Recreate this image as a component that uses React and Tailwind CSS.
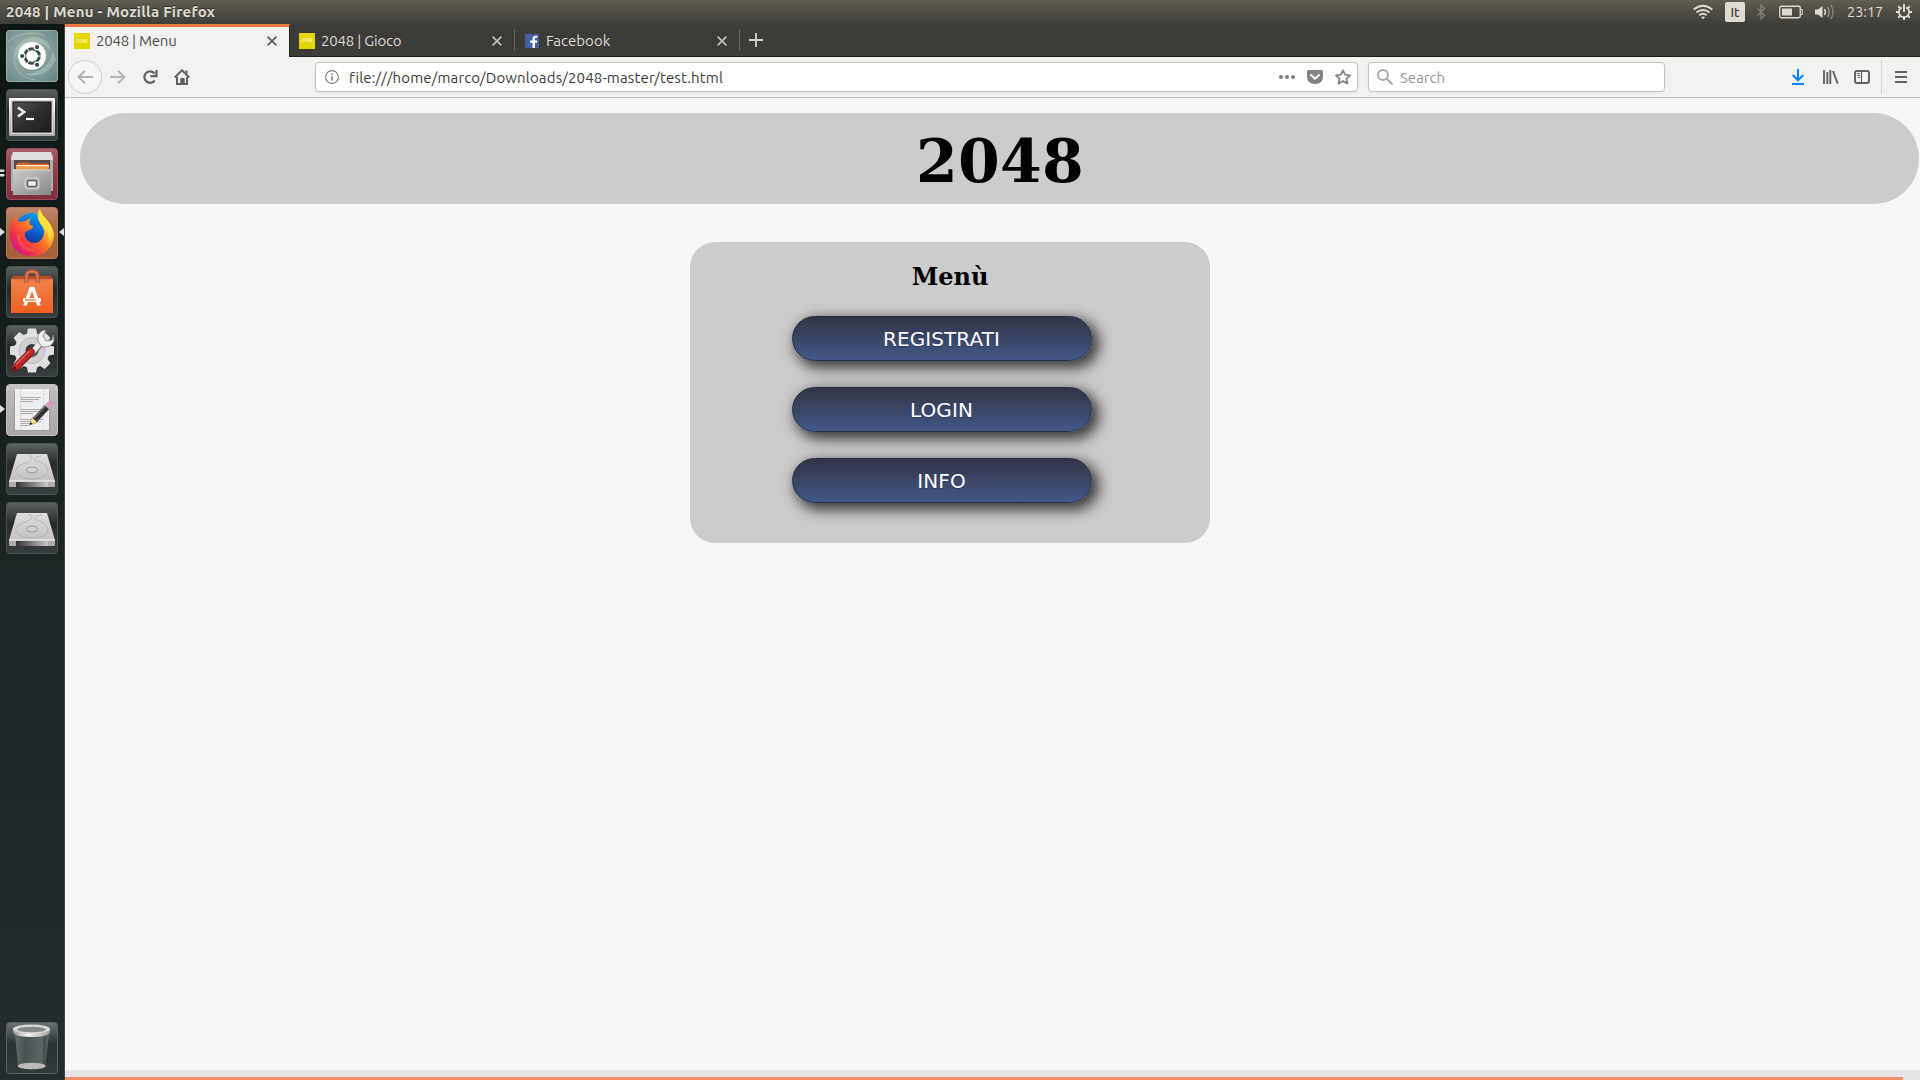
import React from 'react';

const UI = "font-['Ubuntu','Noto_Sans',sans-serif]";

/* ---------- launcher artwork ---------- */

function UbuntuLogo() {
  return (
    <svg viewBox="0 0 52 52" className="size-full">
      <defs>
        <radialGradient id="ub" cx=".45" cy=".45" r=".75">
          <stop offset="0" stopColor="#a9bfbc" />
          <stop offset=".6" stopColor="#7d9a98" />
          <stop offset="1" stopColor="#5f8280" />
        </radialGradient>
      </defs>
      <rect width="52" height="52" rx="3.5" fill="url(#ub)" />
      <path d="M8 34C6 18 16 7 30 7c8 1 14 6 15 15-4-7-10-10-18-9C15 14 9 22 8 34Z" fill="#c6d5d2" opacity=".4" />
      <path d="M18 44c14 5 27-2 32-15l-4-10c1 14-10 25-28 25Z" fill="#d2dedb" opacity=".35" />
      <path d="M2 12C12 3 26 1 38 5M8 32c2 10 10 17 22 18" fill="none" stroke="#bfd0cd" opacity=".6" />
      <circle cx="26" cy="27" r="14" fill="#4d6866" opacity=".6" />
      <circle cx="26" cy="26" r="14" fill="#fbfbfa" />
      <circle cx="26" cy="26" r="7.3" fill="none" stroke="#3b4d4b" strokeWidth="3" />
      <g stroke="#fbfbfa" strokeWidth="1.2" fill="#3b4d4b">
        <circle cx="16.2" cy="26" r="2.7" />
        <circle cx="31" cy="17.2" r="2.7" />
        <circle cx="31" cy="34.8" r="2.7" />
      </g>
      <path d="M26 26l-5 8M26 26l-5-8M26 26h10" stroke="#fbfbfa" strokeWidth="1" />
      <circle cx="26" cy="26" r="5.6" fill="#fbfbfa" />
      <rect x=".5" y=".5" width="51" height="51" rx="3.5" fill="none" stroke="#b2c6c4" opacity=".6" />
    </svg>
  );
}

function TileBack({ id, top, mid, bottom, edge }) {
  return (
    <>
      <defs>
        <linearGradient id={id} x1="0" y1="0" x2="0" y2="1">
          <stop offset="0" stopColor={top} />
          <stop offset=".42" stopColor={mid} />
          <stop offset="1" stopColor={bottom} />
        </linearGradient>
      </defs>
      <rect x=".5" y=".5" width="51" height="51" rx="3.5" fill={`url(#${id})`} stroke={edge} />
    </>
  );
}

const DARK = { top: '#5d6262', mid: '#242a2a', bottom: '#373e3f', edge: '#4b5252' };

function Terminal() {
  return (
    <svg viewBox="0 0 52 52" className="size-full">
      <TileBack id="tt" {...DARK} />
      <defs>
        <linearGradient id="scr" x1="0" y1="0" x2="1" y2="1">
          <stop offset="0" stopColor="#555" />
          <stop offset=".5" stopColor="#2d2d2d" />
          <stop offset="1" stopColor="#1c1c1c" />
        </linearGradient>
        <linearGradient id="frm" x1="0" y1="0" x2="0" y2="1">
          <stop offset="0" stopColor="#fff" />
          <stop offset="1" stopColor="#a9a9a9" />
        </linearGradient>
      </defs>
      <rect x="3" y="9" width="46" height="38" rx="1" fill="url(#frm)" />
      <rect x="5" y="11" width="42" height="34" fill="#d2d2d2" />
      <rect x="7" y="13" width="38" height="30" fill="url(#scr)" stroke="#111" />
      <path d="M12 18.500l6 4.500-6 4.500" fill="none" stroke="#e8e8e8" strokeWidth="2.800" />
      <path d="M20 30h8" stroke="#fff" strokeWidth="2.200" />
    </svg>
  );
}

function Files() {
  return (
    <svg viewBox="0 0 52 52" className="size-full">
      <TileBack id="ft" top="#a55f68" mid="#8c3d48" bottom="#7d2f3b" edge="#a04d59" />
      <defs>
        <linearGradient id="drw" x1="0" y1="0" x2="1" y2="1">
          <stop offset="0" stopColor="#cdcdcd" />
          <stop offset="1" stopColor="#868686" />
        </linearGradient>
      </defs>
      <path d="M7 4h38l2 4v35H5V8Z" fill="#adadad" />
      <path d="M7 4h38l2 8H5Z" fill="#dedede" />
      <rect x="8" y="12" width="36" height="10" fill="#5b4a44" />
      <path d="M11 16l2-1.500h9l2 1h18v7H11Z" fill="#d9622f" />
      <path d="M10 17h33v1.500H10Z" fill="#fff1da" />
      <path d="M10 18.500h33v3H10Z" fill="#f0a04b" />
      <path d="M7 21.500h38v25.500H7Z" fill="url(#drw)" />
      <path d="M7 22h38" stroke="#dadada" />
      <rect x="19" y="30" width="14" height="11" rx="2" fill="#b9b9b9" stroke="#d5d5d5" />
      <rect x="21.500" y="32.500" width="9" height="6" rx="1" fill="#eee" stroke="#5d5d5d" strokeWidth="1.400" />
    </svg>
  );
}

function Firefox() {
  return (
    <svg viewBox="0 0 52 52" className="size-full">
      <TileBack id="fx" top="#c08a6b" mid="#a96744" bottom="#a7603c" edge="#b97a58" />
      <defs>
        <linearGradient id="fox" x1=".9" y1=".1" x2=".15" y2=".85">
          <stop offset="0" stopColor="#fff44f" />
          <stop offset=".28" stopColor="#ffc02a" />
          <stop offset=".5" stopColor="#ff7a22" />
          <stop offset=".78" stopColor="#f53a45" />
          <stop offset="1" stopColor="#dc1480" />
        </linearGradient>
        <linearGradient id="glb" x1=".7" y1="0" x2=".3" y2="1">
          <stop offset="0" stopColor="#0aa0ea" />
          <stop offset=".5" stopColor="#0d62d2" />
          <stop offset="1" stopColor="#16257d" />
        </linearGradient>
      </defs>
      <circle cx="26" cy="23" r="17" fill="url(#glb)" />
      <path d="M9 10l4 5c3-1 5 0 7-1s3-3 5-3c-2 2-2 4-1 7l3 1c0 3-4 4-6 5s-3 3-2 5c1 4 5 7 9 7 6 0 10-5 10-11 0-5-3-7-5-11-2-4-2-9 1-12 1 5 5 8 8 12 4 5 6 10 6 15C47 41 38 49 26 49 13 49 4 40 4 28c0-6 1-13 5-18Z" fill="url(#fox)" />
      <path d="M34 2c0 5 4 8 8 13 5 6 5 14 1 21 1-8-3-12-7-17-4-5-5-12-2-17Z" fill="#ffe83d" opacity=".7" />
      <path d="M13 27c-2 9 6 17 15 16" fill="none" stroke="#ff7a3b" strokeWidth="3" opacity=".4" />
    </svg>
  );
}

function Software() {
  return (
    <svg viewBox="0 0 52 52" className="size-full">
      <TileBack id="st" {...DARK} />
      <defs>
        <linearGradient id="bag" x1="0" y1="0" x2="0" y2="1">
          <stop offset="0" stopColor="#cf5934" />
          <stop offset=".15" stopColor="#f1824b" />
          <stop offset="1" stopColor="#ee5f1f" />
        </linearGradient>
      </defs>
      <path d="M5 13l3-3h36l3 3v34H5Z" fill="url(#bag)" />
      <path d="M5 13l3-3h36l3 3Z" fill="#b84d2c" />
      <path d="M20.500 17V10q0-4.500 5.500-4.500t5.500 4.500v7" fill="none" stroke="#a84a2c" strokeWidth="4" />
      <path d="M20.500 17V10q0-4.500 5.500-4.500t5.500 4.500v7" fill="none" stroke="#d97a55" strokeWidth="2.400" />
      <path d="M19 39.500l6-17h2l6 17" fill="none" stroke="#fff" strokeWidth="3.600" />
      <rect x="17" y="32" width="18" height="4" rx="1.500" fill="#fff" />
      <path d="M19 34h11" stroke="#ee6b2e" strokeWidth="1.200" />
    </svg>
  );
}

const TEETH = [0, 45, 90, 135, 180, 225, 270, 315];

function Settings() {
  return (
    <svg viewBox="0 0 52 52" className="size-full">
      <TileBack id="se" {...DARK} />
      <g fill="#e0e0e0">
        {TEETH.map((a) => (
          <path key={a} d="M22 3.500h8l1.500 7h-11Z" transform={`rotate(${a} 26 25.500)`} />
        ))}
        <circle cx="26" cy="25.500" r="17.500" />
      </g>
      <circle cx="26" cy="25.500" r="13" fill="#d0d0d0" stroke="#bcbcbc" />
      <circle cx="26" cy="25.500" r="6.500" fill="#363b3b" />
      <path d="M24 30.500l12-13" stroke="#777" strokeWidth="6.500" />
      <path d="M24 29.500l12-13" stroke="#ececec" strokeWidth="5" />
      <path d="M32 15c-1-5 2-10 8-10l-3 6 3 5 6-1 1-5c3 6-1 12-8 12-4 0-6-3-7-7Z" fill="#f1f1f1" stroke="#777" strokeWidth=".8" />
      <path d="M9.500 42.500L25 27" stroke="#7c1512" strokeWidth="7.500" strokeLinecap="round" />
      <path d="M9.500 42L25 26.500" stroke="#bf2926" strokeWidth="6" strokeLinecap="round" />
      <path d="M10 39.500L23 26.500" stroke="#da625f" strokeWidth="1.300" strokeLinecap="round" />
      <circle cx="8.800" cy="43" r="1.400" fill="#40100e" />
    </svg>
  );
}

function Gedit() {
  return (
    <svg viewBox="0 0 52 52" className="size-full">
      <TileBack id="ge" top="#c6c4c4" mid="#b3b1b1" bottom="#aaa8a8" edge="#c4c2c2" />
      <rect x="8" y="6" width="36" height="41" fill="#8d8d8d" opacity=".6" />
      <rect x="9" y="5" width="34" height="41" fill="#f1f1f1" />
      <path d="M14.500 5v41" stroke="#f3c4c4" />
      <path d="M37.500 5v41" stroke="#cfdcf0" strokeWidth=".8" />
      <path d="M10 10h32M10 19h32M10 22h32M10 31h32M10 42h32" stroke="#dde7f3" strokeWidth=".7" />
      <path d="M15 13.500h20M15 15.500h18M15 17.500h12M15 25.500h20M15 27.500h18M15 29.500h12M15 35.500h22M15 37.500h20M15 39.500h12M15 41.500h8" stroke="#a3a3a3" strokeWidth=".9" />
      <path d="M23.500 41l2.500-7.500 5.500 5Z" fill="#f0e186" stroke="#8c8240" strokeWidth=".5" />
      <path d="M23.500 41l1-3 2 1.900Z" fill="#222" />
      <path d="M28.800 36L41 23" stroke="#333" strokeWidth="6" />
      <path d="M28 34.200L39.500 22" stroke="#808080" strokeWidth="1.200" />
      <path d="M41 23l2-2" stroke="#bbb" strokeWidth="6" />
      <path d="M43 20.900l1.300-1.400" stroke="#dc9ac3" strokeWidth="5.800" strokeLinecap="round" />
    </svg>
  );
}

function Disk({ id }) {
  return (
    <svg viewBox="0 0 52 52" className="size-full">
      <TileBack id={`${id}t`} {...DARK} />
      <defs>
        <linearGradient id={`${id}a`} x1="0" y1="0" x2="0" y2="1">
          <stop offset="0" stopColor="#dedede" />
          <stop offset="1" stopColor="#c3c3c3" />
        </linearGradient>
        <linearGradient id={`${id}b`} x1="0" y1="0" x2="1" y2="0">
          <stop offset="0" stopColor="#333" />
          <stop offset="1" stopColor="#c9c9c9" />
        </linearGradient>
      </defs>
      <path d="M11 11h30l8 27H3Z" fill={`url(#${id}a)`} />
      <path d="M3 38h46v5q0 1-1 1H4q-1 0-1-1Z" fill="#aeaeae" />
      <path d="M10 39h32v5H10Z" fill={`url(#${id}b)`} />
      <path d="M3 38h46" stroke="#fff" />
      <path d="M22 13c8-1 3 5-2 7-7 2-11 5-10 9 1 4 8 7 16 7s16-3 16-8-6-9-12-10c-3-1-1-4 5-5" fill="none" stroke="#b0b0b0" strokeWidth=".9" />
      <ellipse cx="26" cy="27" rx="5.500" ry="3" fill="#d2d2d2" stroke="#8f8f8f" strokeWidth=".9" />
    </svg>
  );
}

function Trash() {
  return (
    <svg viewBox="0 0 52 52" className="size-full">
      <TileBack id="tr" top="#6c7475" mid="#2a3132" bottom="#30393b" edge="#5a6263" />
      <defs>
        <linearGradient id="can" x1="0" y1="0" x2="1" y2="0">
          <stop offset="0" stopColor="#6c7373" />
          <stop offset=".3" stopColor="#4f5656" />
          <stop offset=".8" stopColor="#666d6d" />
          <stop offset=".85" stopColor="#474e4e" />
          <stop offset="1" stopColor="#6b7272" />
        </linearGradient>
        <linearGradient id="rim" x1="0" y1="0" x2="1" y2="0">
          <stop offset="0" stopColor="#979797" />
          <stop offset=".4" stopColor="#f3f3ef" />
          <stop offset="1" stopColor="#a0a09d" />
        </linearGradient>
      </defs>
      <path d="M9 12h34l-3.500 32q-1 3.500-13.500 3.500T12 44Z" fill="url(#can)" opacity=".85" />
      <ellipse cx="25.700" cy="44" rx="14" ry="3.300" fill="#b8bab8" />
      <path d="M7 7v3.500q3 4.500 18.500 4.500T44 10.500V7Z" fill="url(#rim)" />
      <ellipse cx="25.500" cy="7" rx="18.500" ry="4.500" fill="#dadad6" />
      <ellipse cx="25.500" cy="7.500" rx="14.500" ry="2.800" fill="#858a89" />
    </svg>
  );
}

function Launcher() {
  const apps = [
    { k: 'dash', el: <UbuntuLogo /> },
    { k: 'term', el: <Terminal /> },
    { k: 'files', el: <Files />, mark: 'double' },
    { k: 'firefox', el: <Firefox />, mark: 'active' },
    { k: 'software', el: <Software /> },
    { k: 'settings', el: <Settings /> },
    { k: 'gedit', el: <Gedit />, mark: 'single' },
    { k: 'disk1', el: <Disk id="d1" /> },
    { k: 'disk2', el: <Disk id="d2" /> },
  ];
  return (
    <aside className="flex w-[65px] shrink-0 flex-col gap-[7px] border-r border-[#3c4444] bg-linear-to-b from-[#0e1615] via-[#1c2524] via-50% to-[#232d2f] pt-[6px] pb-[6px]">
      {apps.map((a) => (
        <div key={a.k} className="relative h-[52px] w-full shrink-0 pl-[6px]">
          <div className="size-[52px]">{a.el}</div>
          {(a.mark === 'active' || a.mark === 'single') && (
            <svg viewBox="0 0 5 8" className="absolute top-[21px] left-0 h-[8px] w-[5px]">
              <path d="M0 0l5 4-5 4Z" fill="#dedede" />
            </svg>
          )}
          {a.mark === 'active' && (
            <svg viewBox="0 0 5 8" className="absolute top-[21px] right-0 h-[8px] w-[5px]">
              <path d="M5 0L0 4l5 4Z" fill="#dedede" />
            </svg>
          )}
          {a.mark === 'double' && (
            <svg viewBox="0 0 5 8" className="absolute top-[21px] left-0 h-[8px] w-[5px]">
              <path d="M0 .5h3.500l1.500 1L3.500 3H0ZM0 5h3.500l1.500 1.200L3.500 7.500H0Z" fill="#dedede" />
            </svg>
          )}
        </div>
      ))}
      <div className="mt-auto ml-[6px] size-[52px]">
        <Trash />
      </div>
    </aside>
  );
}

/* ---------- system panel ---------- */

function TopPanel() {
  return (
    <header className="flex h-6 shrink-0 items-center bg-linear-to-b from-[#5f5c50] to-[#3f3e39] pl-[6px] text-[#dfdbd2]">
      <span className="text-[15px] leading-6 font-bold tracking-[0.240px] whitespace-nowrap [text-shadow:0_-1px_0_#2b2a26]">2048 | Menu - Mozilla Firefox</span>
      <svg viewBox="0 0 20 16" className="ml-auto h-4 w-5 shrink-0" fill="none" stroke="#dfdbd2" strokeWidth="1.800">
        <path d="M.700 5.500q9.300-7.500 18.600 0M3.500 8.500q6.500-5 13 0M6.300 11.300q3.700-3 7.400 0" />
        <path d="M8 13.300q2-1.500 4 0l-2 2Z" fill="#dfdbd2" stroke="none" />
      </svg>
      <span className="ml-3 flex size-5 shrink-0 items-center justify-center rounded-[2px] bg-[#dfdbd2] text-[13px] leading-none font-medium text-[#3c3b37]">It</span>
      <svg viewBox="0 0 10 16" className="ml-[11px] h-4 w-[10px] shrink-0" fill="none" stroke="#85827a" strokeWidth="1.300">
        <path d="M1.500 4.500l7 7L5 15V1l3.500 3.500-7 7" />
      </svg>
      <svg viewBox="0 0 24 14" className="ml-[13px] h-[14px] w-6 shrink-0" fill="none" stroke="#dfdbd2">
        <rect x=".750" y="1.250" width="20.500" height="11.500" rx="1.500" strokeWidth="1.300" />
        <rect x="3" y="3.500" width="10" height="7" fill="#dfdbd2" stroke="none" />
        <path d="M22 4.500h1.300v5H22" />
      </svg>
      <svg viewBox="0 0 20 16" className="ml-3 h-4 w-5 shrink-0" fill="none">
        <path d="M0 5.500h3L7.500 2v12L3 10.500H0Z" fill="#dfdbd2" />
        <path d="M9.500 5q2 3 0 6" stroke="#dfdbd2" strokeWidth="1.500" />
        <path d="M12.500 3q3.500 5 0 10" stroke="#96938a" strokeWidth="1.500" />
        <path d="M15.500 .800q5 7.200 0 14.400" stroke="#827f77" strokeWidth="1.500" />
      </svg>
      <span className="ml-[12px] w-[37px] shrink-0 text-[14.500px] leading-6 whitespace-nowrap">23:17</span>
      <svg viewBox="0 0 16 16" className="mr-2 ml-[12px] size-4 shrink-0" fill="none" stroke="#dfdbd2">
        <path d="M5.800 3.300a5.200 5.200 0 1 0 4.400 0" strokeWidth="1.900" />
        <path d="M8 0v8" strokeWidth="2" />
        <path d="M0 8h2.500M13.500 8H16M8 13.500V16M2.300 2.300l1.800 1.800M13.700 2.300l-1.800 1.800M2.300 13.700l1.800-1.800M13.700 13.700l-1.800-1.800" strokeWidth="2" />
      </svg>
    </header>
  );
}

/* ---------- browser chrome ---------- */

function Favicon2048() {
  return (
    <span className="flex size-4 shrink-0 items-center justify-center bg-[#e6d600] text-[5px] leading-none font-bold text-[#fbf6b8]">2048</span>
  );
}

function FavFacebook() {
  return (
    <svg viewBox="0 0 14 14" className="size-[14px] shrink-0">
      <rect width="14" height="14" rx=".500" fill="#4460a0" />
      <path d="M7.500 14V8.700H5.300V6.500h2.200V5c0-2.300 1.300-3.300 3.200-3.300h1.600v2.100h-1.200c-.900 0-1.200.4-1.200 1.200v1.500h2.300l-.300 2.200h-2V14Z" fill="#fff" />
    </svg>
  );
}

function Close({ color }) {
  return (
    <svg viewBox="0 0 10 10" className="mr-3 ml-auto size-[10px] shrink-0" stroke={color} strokeWidth="1.700">
      <path d="M.600 .600l8.800 8.800M9.400 .600L.600 9.400" />
    </svg>
  );
}

function Tabs() {
  return (
    <div className="flex h-[33px] shrink-0 border-b border-[#1f1e1b] bg-[#3c3b37] text-[15px]">
      <div className="-mb-px flex w-[225px] items-center border-t-[3px] border-r border-t-[#f07746] border-r-[#24231f] bg-[#f3f2f1] pb-[2px] pl-[9px] text-[#4c4c4c]">
        <Favicon2048 />
        <span className="ml-[6px] tracking-[-0.250px] whitespace-nowrap">2048 | Menu</span>
        <Close color="#5c5b5a" />
      </div>
      <div className="flex w-[225px] items-center pt-px pr-px pl-[9px] text-[#dcd9d2]">
        <Favicon2048 />
        <span className="ml-[6px] pt-px tracking-[-0.200px] whitespace-nowrap">2048 | Gioco</span>
        <Close color="#c3bfb6" />
      </div>
      <div className="my-[5px] -ml-px w-px bg-[#6b6963]" />
      <div className="flex w-[225px] items-center pt-px pr-px pl-[10px] text-[#dcd9d2]">
        <FavFacebook />
        <span className="ml-[7px] pt-px tracking-[0.020px] whitespace-nowrap">Facebook</span>
        <Close color="#c3bfb6" />
      </div>
      <div className="my-[5px] -ml-px w-px bg-[#6b6963]" />
      <svg viewBox="0 0 14 14" className="mt-[9px] ml-[9px] size-[14px]" stroke="#d2cec5" strokeWidth="1.800">
        <path d="M7 0v14M0 7h14" />
      </svg>
    </div>
  );
}

function NavBar() {
  return (
    <div className="flex h-[41px] shrink-0 items-center border-b border-[#bfbfbf] bg-[#f3f2f1] pl-[3px] text-[15px]">
      <div className="flex size-[34px] shrink-0 items-center justify-center rounded-full border border-[#cfcecc] bg-[#f7f6f5]">
        <svg viewBox="0 0 16 14" className="h-[14px] w-4" fill="none" stroke="#b4b3b1" strokeWidth="2">
          <path d="M16 7H1.500M8 .700L1.500 7 8 13.300" />
        </svg>
      </div>
      <svg viewBox="0 0 16 14" className="ml-2 h-[14px] w-4 shrink-0" fill="none" stroke="#b4b3b1" strokeWidth="2">
        <path d="M0 7h14.500M8 .700L14.500 7 8 13.300" />
      </svg>
      <svg viewBox="0 0 16 16" className="ml-4 size-4 shrink-0" fill="none" stroke="#636261" strokeWidth="2.200">
        <path d="M12.700 11.500A5.700 5.700 0 1 1 12.500 4.500" />
        <path d="M14.500 1v6.200H8.500" />
      </svg>
      <svg viewBox="0 0 16 16" className="ml-4 size-4 shrink-0" fill="none" stroke="#636261">
        <path d="M.700 8.500L8 1.300l7.300 7.200" strokeWidth="2" />
        <path d="M3 8v7h10V8" strokeWidth="2" />
        <path d="M6.800 15V9.500h3.400V15Z" fill="#636261" strokeWidth="1" />
        <path d="M12.500 1.500v3" strokeWidth="2" />
      </svg>

      <div className="ml-[125px] flex h-[30px] w-[1043px] shrink-0 items-center rounded-[4px] border border-[#c4c2bf] bg-white shadow-[0_1px_3px_rgba(0,0,0,0.06)]">
        <svg viewBox="0 0 14 14" className="ml-[9px] size-[14px] shrink-0" fill="none" stroke="#7d7d7d">
          <circle cx="7" cy="7" r="6.400" strokeWidth="1.100" />
          <path d="M7 6v4.500M7 3.300v1.500" strokeWidth="1.600" />
        </svg>
        <span className="ml-[10px] pt-[3px] tracking-[0.150px] whitespace-nowrap text-[#3c3c3c]">file:///home/marco/Downloads/2048-master/test.html</span>
        <svg viewBox="0 0 16 4" className="ml-auto h-1 w-4 shrink-0" fill="#7d7d7d">
          <circle cx="2" cy="2" r="2" />
          <circle cx="8" cy="2" r="2" />
          <circle cx="14" cy="2" r="2" />
        </svg>
        <svg viewBox="0 0 16 14" className="ml-3 h-[14px] w-4 shrink-0">
          <path d="M1.500 0h13Q16 0 16 1.500V6q0 8-8 8T0 6V1.500Q0 0 1.500 0Z" fill="#838383" />
          <path d="M4 5l4 3.800L12 5" fill="none" stroke="#fff" strokeWidth="2" strokeLinecap="round" strokeLinejoin="round" />
        </svg>
        <svg viewBox="0 0 16 16" className="mr-[6px] ml-3 size-4 shrink-0" fill="none" stroke="#838383" strokeWidth="1.800" strokeLinejoin="round">
          <path d="M8 1.300l2.100 4.400 4.900.6-3.600 3.300 1 4.900L8 12.100l-4.400 2.400 1-4.900L1 6.300l4.900-.6Z" />
        </svg>
      </div>

      <div className="ml-[10px] flex h-[30px] w-[297px] shrink-0 items-center rounded-[4px] border border-[#c4c2bf] bg-white shadow-[0_1px_3px_rgba(0,0,0,0.06)]">
        <svg viewBox="0 0 16 16" className="ml-2 size-4 shrink-0" fill="none" stroke="#a8a8a8" strokeWidth="2">
          <circle cx="6" cy="6" r="5" />
          <path d="M9.700 9.700l5.800 5.800" />
        </svg>
        <span className="ml-[7px] pt-[3px] text-[#969696]">Search</span>
      </div>

      <svg viewBox="0 0 12 16" className="ml-auto h-4 w-3 shrink-0" fill="none" stroke="#0a84ff" strokeWidth="2">
        <path d="M6 0v11M.700 6L6 11.300 11.300 6M0 15h12" />
      </svg>
      <svg viewBox="0 0 16 14" className="ml-[19px] h-[14px] w-4 shrink-0" fill="none" stroke="#636261" strokeWidth="2">
        <path d="M1 0v14M4.300 2v12M7.300 0v14M10 1l4.700 12.700" strokeWidth="1.900" />
      </svg>
      <svg viewBox="0 0 16 14" className="ml-[15px] h-[14px] w-4 shrink-0" fill="none" stroke="#636261">
        <rect x="1" y="1" width="14" height="12" rx="2" strokeWidth="2" />
        <path d="M7.500 1v12" strokeWidth="1.200" />
        <path d="M3 3.500h3M3 5.500h3M4 7.500h2" />
      </svg>
      <div className="ml-[11px] h-[34px] w-px shrink-0 bg-[#d2d1cf]" />
      <svg viewBox="0 0 12 12" className="mr-[13px] ml-[13px] size-3 shrink-0" stroke="#636261" strokeWidth="2">
        <path d="M0 1h12M0 6h12M0 11h12" />
      </svg>
    </div>
  );
}

/* ---------- page ---------- */

function Page() {
  return (
    <main className="flex flex-1 flex-col bg-[#f7f7f7] pt-[15px] text-black">
      <h1 className="ml-[15px] flex h-[91px] w-[1839px] shrink-0 items-center justify-center rounded-full bg-[#ccc] pt-[5px] pl-px font-['DejaVu_Serif',serif] text-[60px] leading-none font-bold tracking-[0.200px]">2048</h1>
      <section className="mt-[38px] ml-[625px] flex h-[301px] w-[520px] shrink-0 flex-col rounded-[25px] bg-[#ccc]">
        <h2 className="mt-[21px] h-7 text-center font-['DejaVu_Serif',serif] text-[24px] leading-7 font-bold">Menù</h2>
        <nav className="mt-[25px] ml-[102px] flex w-[300px] flex-col gap-[26px]">
          {['REGISTRATI', 'LOGIN', 'INFO'].map((t) => (
            <button
              key={t}
              className="h-[45px] rounded-[28px] border border-[#1f2f47] bg-linear-to-b from-[#333345] to-[#415989] pt-px pr-px font-['DejaVu_Sans',sans-serif] text-[20px] leading-none tracking-[0.100px] text-white shadow-[5px_5px_14px_2px_#000000b8] [text-shadow:0_1px_0_#283966]"
            >
              {t}
            </button>
          ))}
        </nav>
      </section>
      <div className="mt-auto flex h-[10px] shrink-0 items-end bg-[#e5e5e5]">
        <div className="h-[3px] w-[1838px] bg-[#ef8e67]" />
      </div>
    </main>
  );
}

export default function App() {
  return (
    <div className={`flex h-[1080px] w-[1920px] flex-col overflow-hidden ${UI}`}>
      <TopPanel />
      <div className="flex min-h-0 flex-1">
        <Launcher />
        <div className="flex min-w-0 flex-1 flex-col">
          <Tabs />
          <NavBar />
          <Page />
        </div>
      </div>
    </div>
  );
}
